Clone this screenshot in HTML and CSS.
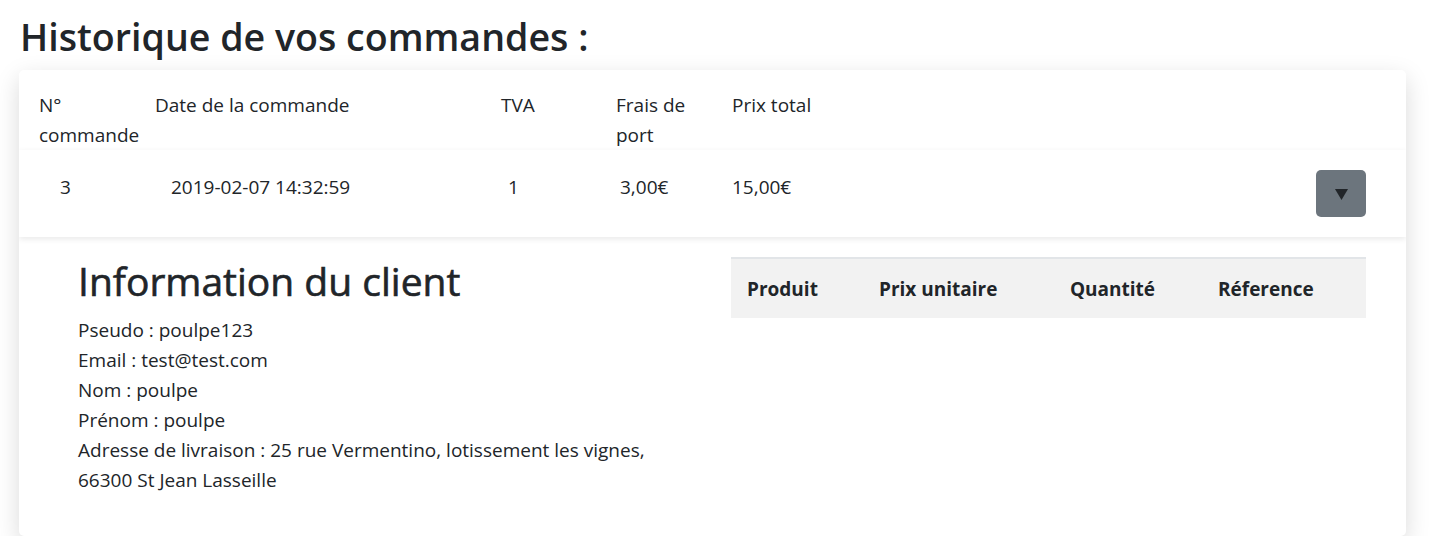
FILE: index.html
```
<!DOCTYPE html>
<html lang="fr">
<head>
<meta charset="utf-8">
<title>Historique de vos commandes</title>
<link rel="stylesheet" href="styles.css">
</head>
<body>
<main class="page">
  <h1 class="page-title">Historique de vos commandes :</h1>
  <section class="card">
    <div class="order-head">
      <div class="h-cell">N° commande</div>
      <div class="h-cell">Date de la commande</div>
      <div class="h-cell">TVA</div>
      <div class="h-cell">Frais de port</div>
      <div class="h-cell">Prix total</div>
    </div>
    <div class="order-row">
      <div class="d-cell">3</div>
      <div class="d-cell">2019-02-07 14:32:59</div>
      <div class="d-cell">1</div>
      <div class="d-cell">3,00€</div>
      <div class="d-cell">15,00€</div>
      <button class="toggle" type="button" aria-label="Détails">
        <svg width="13" height="11" viewBox="0 0 13 11"><polygon points="0,0 13,0 6.5,11" fill="#212529"/></svg>
      </button>
    </div>
    <div class="details">
      <div class="client">
        <h2 class="client-title">Information du client</h2>
        <p class="client-line">Pseudo : poulpe123</p>
        <p class="client-line">Email : test@test.com</p>
        <p class="client-line">Nom : poulpe</p>
        <p class="client-line">Prénom : poulpe</p>
        <p class="client-line">Adresse de livraison : 25 rue Vermentino, lotissement les vignes, 66300 St Jean Lasseille</p>
      </div>
      <div class="products">
        <table class="prod-table">
          <thead>
            <tr>
              <th class="c-prod">Produit</th>
              <th class="c-price">Prix unitaire</th>
              <th class="c-qty">Quantité</th>
              <th class="c-ref">Réference</th>
            </tr>
          </thead>
        </table>
      </div>
    </div>
  </section>
</main>
</body>
</html>
```
FILE: styles.css
```
* { box-sizing: border-box; }
html, body { margin: 0; background: #fff; }
body {
  font-family: "Open Sans", "Noto Sans", sans-serif;
  font-size: 19px;
  line-height: 30px;
  color: #212529;
}
.page { padding: 13px 23px 0 19px; }
.page-title {
  margin: 0 0 9px 1px;
  font-size: 37.6px;
  line-height: 48px;
  font-weight: 600;
}
.card {
  background: #fff;
  border-radius: 5px;
  box-shadow: 0 8px 24px rgba(0,0,0,.15);
  overflow: hidden;
}
.order-head {
  display: grid;
  grid-template-columns: 116px 346px 115px 116px 1fr;
  padding: 20px 20px 0 20px;
}
.h-cell { padding-right: 14px; }
.order-row {
  display: grid;
  grid-template-columns: 111px 337px 112px 112px 1fr auto;
  align-items: start;
  padding: 20px 40px 20px 41px;
  box-shadow: 0 2px 6px rgba(0,0,0,.09);
  position: relative;
}
.d-cell { padding-top: 2px; }
.toggle {
  width: 50px;
  height: 47px;
  border: 0;
  border-radius: 5px;
  background: #6c757d;
  display: flex;
  align-items: center;
  justify-content: center;
  padding: 2px 0 0 0;
}
.toggle svg { display: block; }
.details {
  display: grid;
  grid-template-columns: 672px 635px;
  padding: 20px 40px 41px 40px;
}
.client { padding-left: 19px; }
.client-title {
  margin: 0 0 10px 0;
  font-size: 39px;
  line-height: 48px;
  font-weight: 400;
  -webkit-text-stroke: 0.6px #212529;
}
.client-line { margin: 0; max-width: 590px; }
.prod-table {
  width: 100%;
  border-collapse: collapse;
  table-layout: fixed;
}
.prod-table th {
  background: #f2f2f2;
  border-top: 2px solid #e2e5e8;
  text-align: left;
  font-weight: 700;
  padding: 15px 15px 14px 16px;
  line-height: 30px;
}
.c-prod { width: 132px; }
.c-price { width: 191px; }
.c-qty { width: 148px; }
.c-ref { width: auto; }
```
